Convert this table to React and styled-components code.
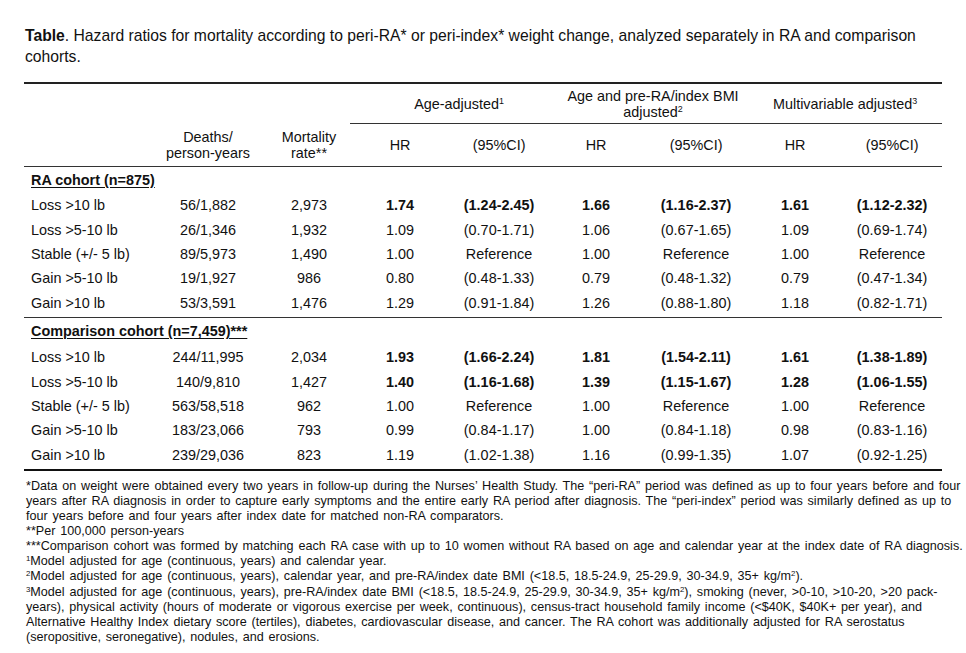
import styled, { createGlobalStyle } from "styled-components";

const GlobalStyle = createGlobalStyle`
  html, body {
    margin: 0;
    padding: 0;
    background: #fff;
  }
  body {
    font-family: "Liberation Sans", Arial, sans-serif;
    color: #111;
  }
`;

const Page = styled.div`
  width: 966px;
  height: 653px;
  box-sizing: border-box;
  padding: 25px 0 0 24px;
  overflow: hidden;
`;

const Caption = styled.p`
  margin: 0 0 15px 1px;
  width: 920px;
  font-size: 15.7px;
  line-height: 21px;
  b {
    font-weight: bold;
  }
`;

const Table = styled.table`
  width: 918px;
  border-collapse: collapse;
  table-layout: fixed;
  border-top: 2px solid #222;
  border-bottom: 2px solid #111;
  font-size: 14.4px;
`;

const GroupHead = styled.th`
  font-weight: normal;
  height: 39px;
  padding: 0 0 0 ${(p) => p.$shift || 0}px;
  line-height: 16px;
  text-align: center;
  vertical-align: middle;
  border-bottom: 1px solid #333;
`;

const ColHead = styled.th`
  font-weight: normal;
  height: 42px;
  padding: 0;
  line-height: 16px;
  text-align: center;
  vertical-align: middle;
`;

const HeadRow = styled.tr`
  border-bottom: ${(p) => (p.$ruled ? "1px solid #333" : "none")};
`;

const SectionRow = styled.tr`
  border-top: ${(p) => (p.$ruled ? "1px solid #333" : "none")};
`;

const SectionCell = styled.td`
  height: ${(p) => p.$h}px;
  padding: 0 0 0 7px;
  font-weight: bold;
  text-decoration: underline;
  text-underline-offset: 2px;
  vertical-align: middle;
`;

const Row = styled.tr``;

const Cell = styled.td`
  height: 24.4px;
  padding: 0 0 ${(p) => p.$pad || 0}px ${(p) => (p.$left ? 7 : 0)}px;
  text-align: ${(p) => (p.$left ? "left" : "center")};
  font-weight: ${(p) => (p.$bold ? "bold" : "normal")};
  white-space: nowrap;
  vertical-align: middle;
`;

const Sup = styled.sup`
  font-size: 0.62em;
  line-height: 0;
  vertical-align: 0.55em;
`;

const Notes = styled.div`
  margin: 8px 0 0 2px;
  font-size: 12.6px;
  line-height: 15.1px;
  word-spacing: 1.3px;
`;

const NoteLine = styled.div`
  white-space: nowrap;
`;

const widths = [124, 120, 82, 100, 98, 96, 104, 94, 100];

const ra = [
  ["Loss >10 lb", "56/1,882", "2,973", "1.74", "(1.24-2.45)", "1.66", "(1.16-2.37)", "1.61", "(1.12-2.32)", true],
  ["Loss >5-10 lb", "26/1,346", "1,932", "1.09", "(0.70-1.71)", "1.06", "(0.67-1.65)", "1.09", "(0.69-1.74)"],
  ["Stable (+/- 5 lb)", "89/5,973", "1,490", "1.00", "Reference", "1.00", "Reference", "1.00", "Reference"],
  ["Gain >5-10 lb", "19/1,927", "986", "0.80", "(0.48-1.33)", "0.79", "(0.48-1.32)", "0.79", "(0.47-1.34)"],
  ["Gain >10 lb", "53/3,591", "1,476", "1.29", "(0.91-1.84)", "1.26", "(0.88-1.80)", "1.18", "(0.82-1.71)"],
];

const comparison = [
  ["Loss >10 lb", "244/11,995", "2,034", "1.93", "(1.66-2.24)", "1.81", "(1.54-2.11)", "1.61", "(1.38-1.89)", true],
  ["Loss >5-10 lb", "140/9,810", "1,427", "1.40", "(1.16-1.68)", "1.39", "(1.15-1.67)", "1.28", "(1.06-1.55)", true],
  ["Stable (+/- 5 lb)", "563/58,518", "962", "1.00", "Reference", "1.00", "Reference", "1.00", "Reference"],
  ["Gain >5-10 lb", "183/23,066", "793", "0.99", "(0.84-1.17)", "1.00", "(0.84-1.18)", "0.98", "(0.83-1.16)"],
  ["Gain >10 lb", "239/29,036", "823", "1.19", "(1.02-1.38)", "1.16", "(0.99-1.35)", "1.07", "(0.92-1.25)"],
];

function DataRows({ rows }) {
  return rows.map((r, i) => {
    const bold = r[9];
    const last = i === rows.length - 1;
    return (
      <Row key={r[0]}>
        {r.slice(0, 9).map((v, j) => (
          <Cell key={j} $left={j === 0} $bold={bold && j >= 3} $pad={last ? 2 : 0}>
            {v}
          </Cell>
        ))}
      </Row>
    );
  });
}

export default function App() {
  return (
    <>
      <GlobalStyle />
      <Page>
        <Caption>
          <b>Table</b>. Hazard ratios for mortality according to peri-RA* or peri-index* weight change, analyzed separately in RA and comparison cohorts.
        </Caption>
        <Table>
          <colgroup>
            {widths.map((w, i) => (
              <col key={i} style={{ width: w }} />
            ))}
          </colgroup>
          <thead>
            <tr>
              <th colSpan={3} />
              <GroupHead colSpan={2} $shift={20}>
                Age-adjusted<Sup>1</Sup>
              </GroupHead>
              <GroupHead colSpan={2} $shift={10}>
                Age and pre-RA/index BMI
                <br />
                adjusted<Sup>2</Sup>
              </GroupHead>
              <GroupHead colSpan={2}>
                Multivariable adjusted<Sup>3</Sup>
              </GroupHead>
            </tr>
            <HeadRow $ruled>
              <ColHead />
              <ColHead>
                Deaths/
                <br />
                person-years
              </ColHead>
              <ColHead>
                Mortality
                <br />
                rate**
              </ColHead>
              <ColHead>HR</ColHead>
              <ColHead>(95%CI)</ColHead>
              <ColHead>HR</ColHead>
              <ColHead>(95%CI)</ColHead>
              <ColHead>HR</ColHead>
              <ColHead>(95%CI)</ColHead>
            </HeadRow>
          </thead>
          <tbody>
            <SectionRow>
              <SectionCell colSpan={9} $h={26}>
                RA cohort (n=875)
              </SectionCell>
            </SectionRow>
            <DataRows rows={ra} />
            <SectionRow $ruled>
              <SectionCell colSpan={9} $h={27}>
                Comparison cohort (n=7,459)***
              </SectionCell>
            </SectionRow>
            <DataRows rows={comparison} />
          </tbody>
        </Table>
        <Notes>
          <NoteLine>
            *Data on weight were obtained every two years in follow-up during the Nurses’ Health Study. The “peri-RA” period was defined as up to four years before and four
          </NoteLine>
          <NoteLine>
            years after RA diagnosis in order to capture early symptoms and the entire early RA period after diagnosis. The “peri-index” period was similarly defined as up to
          </NoteLine>
          <NoteLine>four years before and four years after index date for matched non-RA comparators.</NoteLine>
          <NoteLine>**Per 100,000 person-years</NoteLine>
          <NoteLine>
            ***Comparison cohort was formed by matching each RA case with up to 10 women without RA based on age and calendar year at the index date of RA diagnosis.
          </NoteLine>
          <NoteLine>
            <Sup>1</Sup>Model adjusted for age (continuous, years) and calendar year.
          </NoteLine>
          <NoteLine>
            <Sup>2</Sup>Model adjusted for age (continuous, years), calendar year, and pre-RA/index date BMI (&lt;18.5, 18.5-24.9, 25-29.9, 30-34.9, 35+ kg/m<Sup>2</Sup>).
          </NoteLine>
          <NoteLine>
            <Sup>3</Sup>Model adjusted for age (continuous, years), pre-RA/index date BMI (&lt;18.5, 18.5-24.9, 25-29.9, 30-34.9, 35+ kg/m<Sup>2</Sup>), smoking (never, &gt;0-10, &gt;10-20, &gt;20 pack-
          </NoteLine>
          <NoteLine>
            years), physical activity (hours of moderate or vigorous exercise per week, continuous), census-tract household family income (&lt;$40K, $40K+ per year),  and
          </NoteLine>
          <NoteLine>
            Alternative Healthy Index dietary score (tertiles), diabetes, cardiovascular disease, and cancer. The RA cohort was additionally adjusted for RA serostatus
          </NoteLine>
          <NoteLine>(seropositive, seronegative), nodules, and erosions.</NoteLine>
        </Notes>
      </Page>
    </>
  );
}
